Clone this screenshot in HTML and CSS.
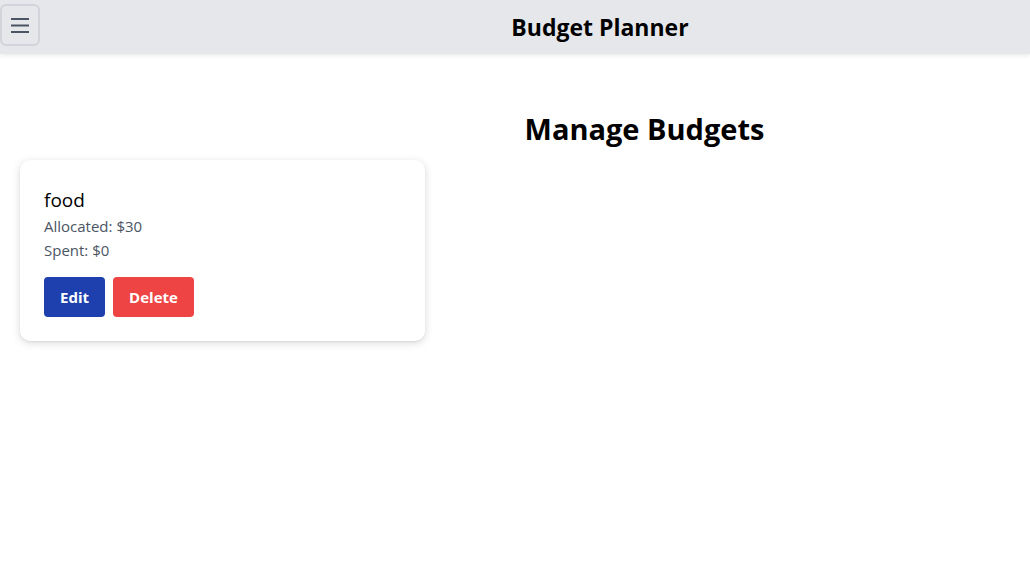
FILE: index.html
```html
<!DOCTYPE html>
<html lang="en">
<head>
<meta charset="utf-8">
<title>Budget Planner</title>
<link rel="stylesheet" href="styles.css">
</head>
<body>
<header class="topbar">
  <button class="menu-btn" aria-label="Menu">
    <svg width="20" height="20" viewBox="0 0 20 20" fill="none" stroke="#4b5563" stroke-width="2">
      <path d="M1 4h18M1 10.5h18M1 17h18"/>
    </svg>
  </button>
  <h1 class="app-title">Budget Planner</h1>
</header>
<main class="main">
  <h2 class="page-title">Manage Budgets</h2>
  <div class="cards">
    <div class="card">
      <h3 class="card-title">food</h3>
      <p class="card-line">Allocated: $30</p>
      <p class="card-line">Spent: $0</p>
      <div class="actions">
        <button class="btn btn-edit">Edit</button>
        <button class="btn btn-delete">Delete</button>
      </div>
    </div>
  </div>
</main>
</body>
</html>
```
FILE: styles.css
```css
* { box-sizing: border-box; }
html, body { margin: 0; padding: 0; }
body {
  font-family: "Open Sans", "Noto Sans", "Liberation Sans", sans-serif;
  background: #ffffff;
  color: #000;
  width: 1030px;
  height: 587px;
  overflow: hidden;
}
.topbar {
  height: 54px;
  background: #e5e7eb;
  display: flex;
  align-items: center;
  box-shadow: 0 2px 4px rgba(0,0,0,0.08);
  position: relative;
}
.menu-btn {
  width: 40px;
  height: 42px;
  margin-top: -4px;
  border: 2px solid #d1d5db;
  border-radius: 6px;
  background: transparent;
  display: flex;
  align-items: center;
  justify-content: center;
  padding: 0;
}
.app-title {
  flex: 1;
  margin: 0;
  padding-left: 130px;
  text-align: center;
  font-size: 23px;
  font-weight: 700;
  line-height: 32px;
}
.main {
  padding: 55px 0 0 20px;
}
.page-title {
  margin: 0 0 11px 0;
  padding-left: 239px;
  text-align: center;
  font-size: 29px;
  font-weight: 700;
  line-height: 40px;
}
.card {
  width: 405px;
  background: #fff;
  border-radius: 10px;
  box-shadow: 0 2px 8px rgba(0,0,0,0.15), 0 1px 2px rgba(0,0,0,0.06);
  padding: 26px 24px 24px 24px;
}
.card-title {
  margin: 0;
  font-size: 19px;
  font-weight: 500;
  line-height: 28px;
}
.card-line {
  margin: 0;
  font-size: 15px;
  line-height: 24px;
  color: #4b5563;
}
.actions {
  display: flex;
  gap: 8px;
  margin-top: 15px;
}
.btn {
  font-family: inherit;
  height: 40px;
  border: none;
  border-radius: 4px;
  color: #fff;
  font-weight: 700;
  font-size: 15px;
  padding: 0 16px;
}
.btn-edit { background: #1e40af; width: 61px; }
.btn-delete { background: #ef4444; width: 81px; }
```
